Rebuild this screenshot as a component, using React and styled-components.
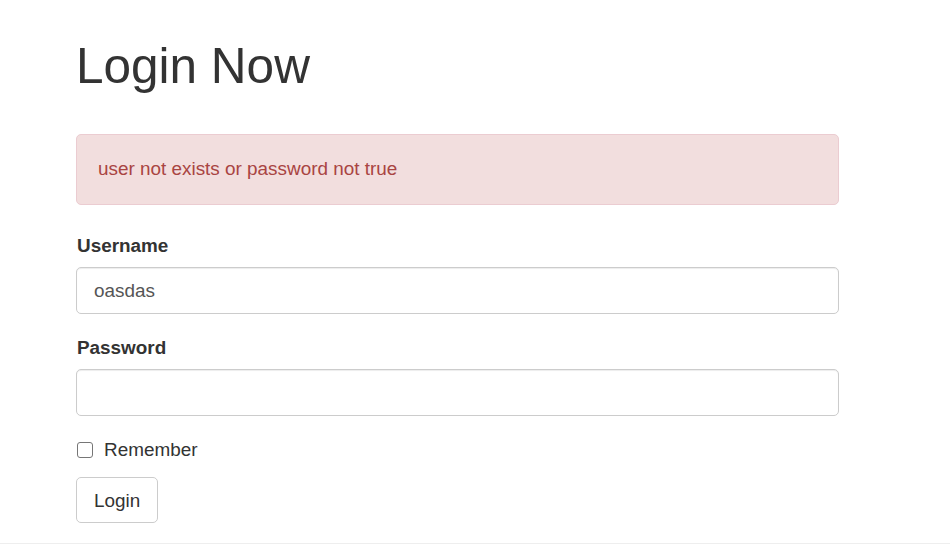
import styled, { createGlobalStyle } from "styled-components";

const GlobalStyle = createGlobalStyle`
    html, body {
        margin: 0;
        padding: 0;
        background: #fff;
    }

    body {
        font-family: "Liberation Sans", Arial, sans-serif;
        font-size: 18.9px;
        line-height: 27px;
        color: #333;
    }

    * {
        box-sizing: border-box;
    }
`;

export default function App() {
    return (
        <>
            <GlobalStyle />
            <Page>
                <Container>
                    <Title>Login Now</Title>

                    <Alert role="alert">user not exists or password not true</Alert>

                    <form onSubmit={(e) => e.preventDefault()}>
                        <FormGroup>
                            <Label htmlFor="username">Username</Label>
                            <Input id="username" type="text" defaultValue="oasdas" />
                        </FormGroup>

                        <FormGroup>
                            <Label htmlFor="password">Password</Label>
                            <Input id="password" type="password" />
                        </FormGroup>

                        <CheckRow>
                            <Checkbox id="remember" type="checkbox" />
                            <CheckLabel htmlFor="remember">Remember</CheckLabel>
                        </CheckRow>

                        <Button type="submit">Login</Button>
                    </form>
                </Container>
                <Footer />
            </Page>
        </>
    );
}

const Page = styled.div`
    min-height: 544px;
    display: flex;
    flex-direction: column;
`;

const Container = styled.main`
    width: 763px;
    margin-left: 76px;
    padding-top: 39px;
`;

const Title = styled.h1`
    margin: 0 0 41px;
    font-size: 49.5px;
    line-height: 54px;
    font-weight: 400;
    color: #333;
`;

const Alert = styled.div`
    padding: 20px 21px 21px;
    margin-bottom: 27px;
    background: #f2dede;
    border: 1px solid #ebccd1;
    border-radius: 5px;
    color: #a94442;
    line-height: 28px;
`;

const FormGroup = styled.div`
    margin-bottom: 20px;
`;

const Label = styled.label`
    display: block;
    margin-bottom: 7px;
    padding-left: 1px;
    font-weight: 700;
    line-height: 28px;
    color: #333;
`;

const Input = styled.input`
    display: block;
    width: 100%;
    height: 47px;
    padding: 8px 17px;
    font-family: inherit;
    font-size: 18.9px;
    color: #555;
    background: #fff;
    border: 1px solid #ccc;
    border-radius: 5px;
    box-shadow: inset 0 1px 1px rgba(0, 0, 0, 0.075);
    outline: none;
`;

const CheckRow = styled.div`
    display: flex;
    align-items: center;
    gap: 11px;
    margin: 0 0 14px;
    height: 27px;
`;

const Checkbox = styled.input`
    appearance: none;
    margin: 0 0 0 1px;
    width: 16px;
    height: 16px;
    border: 1px solid #767676;
    border-radius: 3px;
    background: #fff;
`;

const CheckLabel = styled.label`
    color: #333;
`;

const Button = styled.button`
    display: inline-block;
    height: 46px;
    padding: 8px 17px;
    font-family: inherit;
    font-size: 18.9px;
    line-height: 27px;
    color: #333;
    background: #fff;
    border: 1px solid #ccc;
    border-radius: 5px;
    cursor: pointer;
`;

const Footer = styled.footer`
    margin-top: 20px;
    border-top: 1px solid #eee;
    height: 1px;
`;
